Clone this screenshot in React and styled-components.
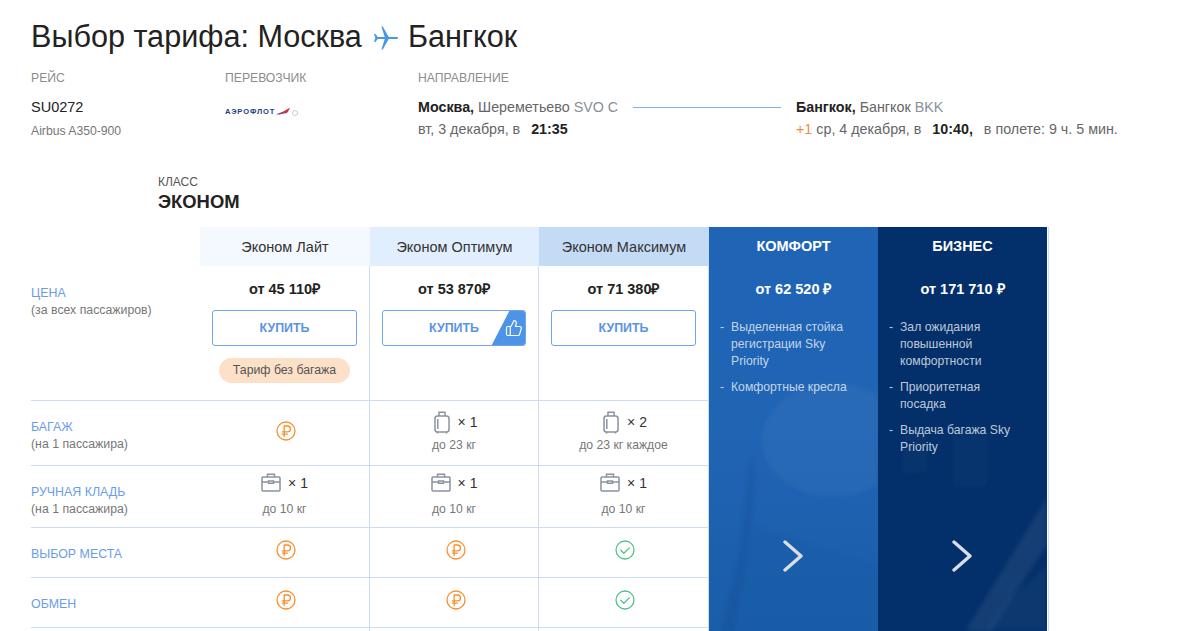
import React from "react";
import styled, { createGlobalStyle } from "styled-components";
import { ThumbsUp } from "lucide-react";

const Global = createGlobalStyle`
  html, body {
    margin: 0;
    height: 631px;
    overflow: hidden;
    background: #fff;
    font-family: "Liberation Sans", Arial, sans-serif;
    color: #222;
  }
`;

const Page = styled.div`
  height: 631px;
  overflow: hidden;
  padding: 18px 0 0 31px;
  box-sizing: border-box;
`;

const Title = styled.h1`
  margin: 0;
  display: flex;
  align-items: center;
  gap: 11px;
  height: 36px;
  font-size: 30.6px;
  font-weight: 400;
  color: #222;
`;

const TitlePlane = styled.svg`
  width: 24px;
  height: 24px;
  margin: 4px -1px 0 1px;
  fill: #4a97e6;
`;

const Info = styled.div`
  display: grid;
  grid-template-columns: 194px 193px 1fr;
  margin-top: 16px;
  height: 105px;
`;

const Caption = styled.div`
  font-size: 12.2px;
  line-height: 16px;
  color: #8d8d8d;
  margin-bottom: 12px;
`;

const Flight = styled.div`
  font-size: 14.5px;
  line-height: 18px;
  color: #222;
`;

const Plane = styled.div`
  font-size: 12.2px;
  line-height: 16px;
  color: #777;
  margin-top: 7px;
`;

const Logo = styled.div`
  display: flex;
  align-items: center;
  height: 12px;
  margin-top: 19px;
  font-size: 7.5px;
  font-weight: 700;
  letter-spacing: 0.9px;
  color: #1c3f80;
`;

const Route = styled.div`
  display: flex;
  align-items: flex-start;
  margin-top: -2px;
`;

const Endpoint = styled.div`
  width: ${(p) => p.$width}px;
  font-size: 14.3px;
  line-height: 22px;
  color: #666;
  white-space: nowrap;
  b {
    color: #222;
  }
`;

const Code = styled.span`
  color: #8a8f98;
`;

const Spaced = styled.b`
  margin: 0 11px 0 7px;
`;

const Plus = styled.span`
  color: #f58a3c;
`;

const RouteLine = styled.div`
  width: 148px;
  height: 1px;
  margin: 11px 15px 0 0;
  background: #7fb0ea;
`;

const ClassBlock = styled.div`
  margin-left: 127px;
  height: 52px;
`;

const ClassCaption = styled.div`
  font-size: 12px;
  line-height: 14px;
  color: #555;
`;

const ClassName = styled.div`
  font-size: 18.4px;
  font-weight: 700;
  line-height: 24px;
  margin-top: 1px;
  color: #222;
`;

const Board = styled.div`
  display: flex;
  width: 1017px;
  height: 404px;
  border-right: 1px solid #cddcf0;
`;

const Table = styled.div`
  width: 678px;
  flex: none;
`;

const Row = styled.div`
  display: grid;
  grid-template-columns: 169px 170px 169px 170px;
  height: ${(p) => p.$height}px;
  box-sizing: border-box;
  border-bottom: ${(p) => (p.$plain ? "none" : "1px solid #cddcf0")};
`;

const Head = styled.div`
  display: flex;
  align-items: center;
  justify-content: center;
  background: ${(p) => p.$bg};
  font-size: 14.5px;
  color: #333;
`;

const Label = styled.div`
  display: flex;
  flex-direction: column;
  justify-content: ${(p) => (p.$top ? "flex-start" : "center")};
  padding-top: ${(p) => (p.$top ? "18px" : `${p.$shift || 0}px`)};
  box-sizing: border-box;
  font-size: 12.4px;
  line-height: 18px;
  color: #6b9ce8;
`;

const LabelNote = styled.span`
  font-size: 12.3px;
  line-height: 17.5px;
  color: #777;
`;

const Cell = styled.div`
  display: flex;
  flex-direction: column;
  align-items: center;
  justify-content: ${(p) => (p.$top ? "flex-start" : "center")};
  border-right: 1px solid #cddcf0;
  padding: 0 12px ${(p) => (p.$lift ? "3px" : "0")};
  box-sizing: border-box;
`;

const Price = styled.div`
  margin-top: 14px;
  font-size: 14.5px;
  line-height: 18px;
  font-weight: 700;
  color: #222;
`;

const Buy = styled.button`
  position: relative;
  overflow: hidden;
  width: 144.5px;
  height: 36px;
  flex: none;
  margin-top: 12px;
  padding: 0;
  border: 1px solid #6fa5ec;
  border-radius: 3px;
  background: #fff;
  font-family: inherit;
  font-size: 12.4px;
  font-weight: 700;
  color: #5b93e4;
`;

const Corner = styled.span`
  position: absolute;
  top: -1px;
  right: -1px;
  bottom: -1px;
  width: 35px;
  display: flex;
  align-items: center;
  justify-content: flex-end;
  padding-right: 3px;
  box-sizing: border-box;
  background: #4d94e6;
  clip-path: polygon(53% 0, 100% 0, 100% 100%, 0 100%);
  color: #fff;
`;

const Badge = styled.div`
  margin-top: 12px;
  height: 25px;
  padding: 0 14px;
  border-radius: 13px;
  background: #fde0c8;
  font-size: 12.3px;
  line-height: 25px;
  color: #555;
`;

const Amount = styled.div`
  display: flex;
  align-items: center;
  gap: ${(p) => p.$gap}px;
  margin-left: ${(p) => p.$shift || 0}px;
  font-size: 14px;
  color: #333;
`;

const Note = styled.div`
  font-size: 12.2px;
  line-height: 16px;
  margin-top: ${(p) => p.$gap || 0}px;
  color: #777;
`;

const Mark = styled.svg`
  width: 20px;
  height: 20px;
  margin: 0 0 5px 3px;
  fill: none;
  stroke: ${(p) => p.$color};
  stroke-width: 1.3;
  stroke-linecap: round;
  stroke-linejoin: round;
`;

const Gear = styled.svg`
  width: ${(p) => p.$w}px;
  height: ${(p) => p.$h}px;
  fill: none;
  stroke: #8a939f;
  stroke-width: 1.5;
`;

const Panel = styled.div`
  position: relative;
  overflow: hidden;
  width: 169px;
  flex: none;
  background: ${(p) => p.$bg};
  color: #fff;
`;

const Backdrop = styled.svg`
  position: absolute;
  inset: 0;
  width: 100%;
  height: 100%;
  filter: blur(2px);
`;

const PanelBody = styled.div`
  position: relative;
  display: flex;
  flex-direction: column;
`;

const PanelTitle = styled.div`
  height: 39px;
  line-height: 39px;
  text-align: center;
  font-size: 14.5px;
  font-weight: 700;
`;

const PanelPrice = styled.div`
  margin-top: 14px;
  line-height: 18px;
  text-align: center;
  font-size: 14.5px;
  font-weight: 700;
`;

const Perks = styled.ul`
  list-style: none;
  margin: 21px 0 0;
  padding: 0 27px 0 22px;
`;

const Perk = styled.li`
  position: relative;
  margin-bottom: 8.6px;
  font-size: 12.2px;
  line-height: 17.2px;
  color: rgba(255, 255, 255, 0.74);
  &::before {
    content: "-";
    position: absolute;
    left: -11px;
  }
`;

const Chevron = styled.svg`
  position: absolute;
  left: 73px;
  top: 313px;
  width: 22px;
  height: 32px;
  fill: none;
  stroke: #d9dee5;
  stroke-width: 3.4;
  stroke-linecap: round;
  stroke-linejoin: round;
`;

const Ruble = () => (
  <Mark viewBox="0 0 20 20" $color="#f7902d">
    <circle cx="10" cy="10" r="9" />
    <path d="M8.200 15.500V5h3.300a2.900 2.900 0 0 1 0 5.900H6.400M6.400 13.200h5" />
  </Mark>
);

const Check = () => (
  <Mark viewBox="0 0 20 20" $color="#4fc585">
    <circle cx="10" cy="10" r="9" />
    <path d="M5.800 10.300l3 3 5.600-5.400" />
  </Mark>
);

const Suitcase = () => (
  <Gear viewBox="0 0 16 23" $w={16} $h={23}>
    <rect x="1" y="5" width="14" height="16" rx="2.500" />
    <path d="M5 5V1.200h6V5M3.500 21v1.400M12.500 21v1.400M3.800 8v10" />
  </Gear>
);

const Briefcase = () => (
  <Gear viewBox="0 0 20 19" $w={20} $h={19}>
    <rect x="1" y="4" width="18" height="14" rx="1" />
    <path d="M6.500 4V1.200h7V4M1 9h6.500M12.500 9H19M7.500 8h5v2.200h-5z" />
  </Gear>
);

const Carry = () => (
  <>
    <Amount $gap={7}>
      <Briefcase /> × 1
    </Amount>
    <Note $gap={9}>до 10 кг</Note>
  </>
);

const Bag = ({ count, note }) => (
  <>
    <Amount $gap={8} $shift={3}>
      <Suitcase /> × {count}
    </Amount>
    <Note $gap={3}>{note}</Note>
  </>
);

const PanelArt = ({ kind }) =>
  kind === "comfort" ? (
    <Backdrop viewBox="0 0 170 404" preserveAspectRatio="none">
      <ellipse cx="125" cy="213" rx="72" ry="57" fill="#ffffff" opacity="0.04" />
      <path d="M42 230 L30 330 L12 404 L26 404 L40 330 L46 250 Z" fill="#0c3f80" opacity="0.18" />
      <path d="M46 300 L170 340 L170 404 L30 404 Z" fill="#14559f" opacity="0.2" />
    </Backdrop>
  ) : (
    <Backdrop viewBox="0 0 170 404" preserveAspectRatio="none">
      <rect x="25" y="200" width="24" height="46" rx="6" fill="#ffffff" opacity="0.025" />
      <rect x="75" y="200" width="35" height="60" rx="6" fill="#ffffff" opacity="0.025" />
      <path d="M170 270 L88 404 L113 404 L170 318 Z" fill="#ffffff" opacity="0.07" />
      <path d="M170 338 L132 372 L108 404 L170 404 Z" fill="#ffffff" opacity="0.04" />
    </Backdrop>
  );

const plans = [
  {
    kind: "comfort",
    bg: "linear-gradient(180deg, #2064b6 0%, #2064b4 50%, #1a5da9 100%)",
    title: "КОМФОРТ",
    price: "от 62 520 ₽",
    perks: ["Выделенная стойка регистрации Sky Priority", "Комфортные кресла"],
  },
  {
    kind: "business",
    bg: "#03306a",
    title: "БИЗНЕС",
    price: "от 171 710 ₽",
    perks: [
      "Зал ожидания повышенной комфортности",
      "Приоритетная посадка",
      "Выдача багажа Sky Priority",
    ],
  },
];

export default function App() {
  return (
    <Page>
      <Global />
      <Title>
        Выбор тарифа: Москва
        <TitlePlane viewBox="0 0 24 24">
          <path d="M24 12c0-.6-.6-1-1.300-1H14.700L8.800.5H7.400l3.300 10.500H3.800L1.400 8H0l1.300 4L0 16h1.400l2.400-3h6.900L7.400 23.500h1.400L14.700 13h8c.7 0 1.300-.4 1.300-1z" />
        </TitlePlane>
        Бангкок
      </Title>

      <Info>
        <div>
          <Caption>РЕЙС</Caption>
          <Flight>SU0272</Flight>
          <Plane>Airbus A350-900</Plane>
        </div>
        <div>
          <Caption>ПЕРЕВОЗЧИК</Caption>
          <Logo>
            АЭРОФЛОТ
            <svg width="24" height="10" viewBox="0 0 24 10">
              <path d="M0 8.500 L13 4 L12 7 Z" fill="#2f5fae" />
              <path d="M2 9.500 L15 1.500 L13 6 Z" fill="#d8313a" />
              <circle cx="20" cy="7" r="2.500" fill="none" stroke="#b5c3d8" strokeWidth="0.8" />
            </svg>
          </Logo>
        </div>
        <div>
          <Caption>НАПРАВЛЕНИЕ</Caption>
          <Route>
            <Endpoint $width={215}>
              <b>Москва,</b> Шереметьево <Code>SVO C</Code>
              <br />
              вт, 3 декабря, в <Spaced>21:35</Spaced>
            </Endpoint>
            <RouteLine />
            <Endpoint>
              <b>Бангкок,</b> Бангкок <Code>BKK</Code>
              <br />
              <Plus>+1</Plus> ср, 4 декабря, в <Spaced>10:40,</Spaced>в полете: 9 ч. 5 мин.
            </Endpoint>
          </Route>
        </div>
      </Info>

      <ClassBlock>
        <ClassCaption>КЛАСС</ClassCaption>
        <ClassName>ЭКОНОМ</ClassName>
      </ClassBlock>

      <Board>
        <Table>
          <Row $height={39} $plain>
            <div />
            <Head $bg="#f4f9ff">Эконом Лайт</Head>
            <Head $bg="#e0eefd">Эконом Оптимум</Head>
            <Head $bg="#c4dbf5">Эконом Максимум</Head>
          </Row>
          <Row $height={135}>
            <Label $top>
              ЦЕНА
              <LabelNote>(за всех пассажиров)</LabelNote>
            </Label>
            <Cell $top>
              <Price>от 45 110₽</Price>
              <Buy>КУПИТЬ</Buy>
              <Badge>Тариф без багажа</Badge>
            </Cell>
            <Cell $top>
              <Price>от 53 870₽</Price>
              <Buy>
                КУПИТЬ
                <Corner>
                  <ThumbsUp size={18} strokeWidth={1.6} />
                </Corner>
              </Buy>
            </Cell>
            <Cell $top>
              <Price>от 71 380₽</Price>
              <Buy>КУПИТЬ</Buy>
            </Cell>
          </Row>
          <Row $height={65}>
            <Label $shift={6}>
              БАГАЖ
              <LabelNote>(на 1 пассажира)</LabelNote>
            </Label>
            <Cell>
              <Ruble />
            </Cell>
            <Cell $lift>
              <Bag count={1} note="до 23 кг" />
            </Cell>
            <Cell $lift>
              <Bag count={2} note="до 23 кг каждое" />
            </Cell>
          </Row>
          <Row $height={62}>
            <Label $shift={8}>
              РУЧНАЯ КЛАДЬ
              <LabelNote>(на 1 пассажира)</LabelNote>
            </Label>
            <Cell $lift>
              <Carry />
            </Cell>
            <Cell $lift>
              <Carry />
            </Cell>
            <Cell $lift>
              <Carry />
            </Cell>
          </Row>
          <Row $height={50}>
            <Label $shift={2}>ВЫБОР МЕСТА</Label>
            <Cell>
              <Ruble />
            </Cell>
            <Cell>
              <Ruble />
            </Cell>
            <Cell>
              <Check />
            </Cell>
          </Row>
          <Row $height={50}>
            <Label $shift={2}>ОБМЕН</Label>
            <Cell>
              <Ruble />
            </Cell>
            <Cell>
              <Ruble />
            </Cell>
            <Cell>
              <Check />
            </Cell>
          </Row>
          <Row $height={50} $plain>
            <div />
            <Cell />
            <Cell />
            <Cell />
          </Row>
        </Table>

        {plans.map((plan) => (
          <Panel key={plan.kind} $bg={plan.bg}>
            <PanelArt kind={plan.kind} />
            <PanelBody>
              <PanelTitle>{plan.title}</PanelTitle>
              <PanelPrice>{plan.price}</PanelPrice>
              <Perks>
                {plan.perks.map((perk) => (
                  <Perk key={perk}>{perk}</Perk>
                ))}
              </Perks>
            </PanelBody>
            <Chevron viewBox="0 0 22 32">
              <path d="M3 2 L19 16 L3 30" />
            </Chevron>
          </Panel>
        ))}
      </Board>
    </Page>
  );
}
